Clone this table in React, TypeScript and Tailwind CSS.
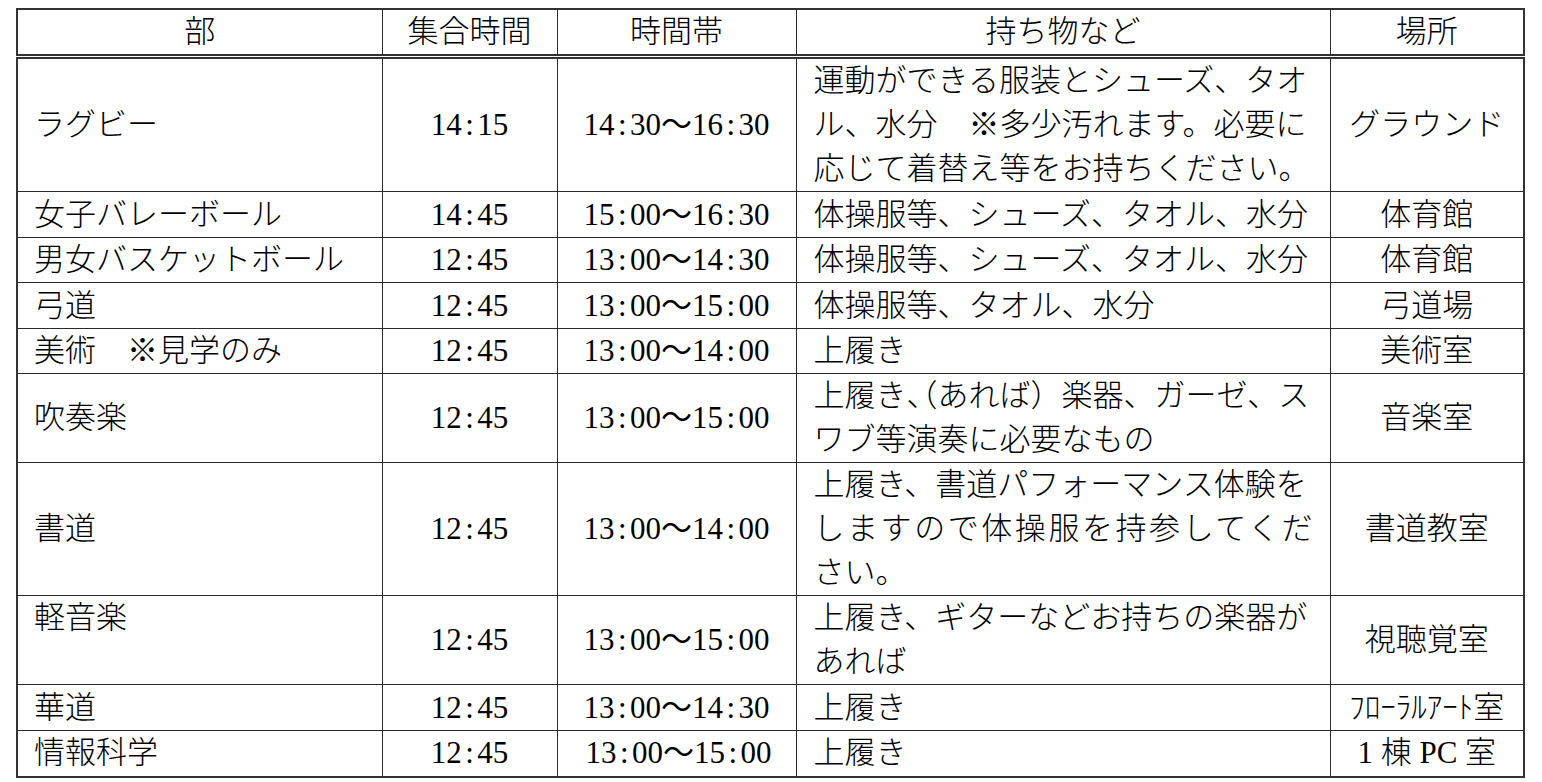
import React from "react";

const FONT = "font-['Liberation_Serif','Noto_Sans_CJK_JP',serif]";

function Time({ s }: { s: string }) {
  const parts = s.split(":");
  const out: React.ReactNode[] = [];
  parts.forEach((p, i) => {
    if (i > 0)
      out.push(
        <span key={"c" + i} className="inline-block w-[0.5em] text-center">
          :
        </span>
      );
    out.push(<span key={"p" + i}>{p}</span>);
  });
  return <span className="whitespace-nowrap font-normal">{out}</span>;
}

type Row = {
  bu: string;
  start: string;
  span: string;
  items: React.ReactNode[];
  place: React.ReactNode;
  h: string;
  buTop?: boolean;
  justifyLine?: number;
  spanPad?: boolean;
};

const H = "[font-feature-settings:'halt']";

const rows: Row[] = [
  {
    bu: "ラグビー",
    start: "14:15",
    span: "14:30〜16:30",
    items: [
      "運動ができる服装とシューズ、タオ",
      "ル、水分　※多少汚れます。必要に",
      "応じて着替え等をお持ちください。",
    ],
    place: "グラウンド",
    h: "h-[133px]",
  },
  {
    bu: "女子バレーボール",
    start: "14:45",
    span: "15:00〜16:30",
    items: ["体操服等、シューズ、タオル、水分"],
    place: "体育館",
    h: "h-[46px]",
  },
  {
    bu: "男女バスケットボール",
    start: "12:45",
    span: "13:00〜14:30",
    items: ["体操服等、シューズ、タオル、水分"],
    place: "体育館",
    h: "h-[45px]",
  },
  {
    bu: "弓道",
    start: "12:45",
    span: "13:00〜15:00",
    items: ["体操服等、タオル、水分"],
    place: "弓道場",
    h: "h-[46px]",
  },
  {
    bu: "美術　※見学のみ",
    start: "12:45",
    span: "13:00〜14:00",
    items: ["上履き"],
    place: "美術室",
    h: "h-[45px]",
  },
  {
    bu: "吹奏楽",
    start: "12:45",
    span: "13:00〜15:00",
    items: [
      <>
        上履き<span className={H}>、（</span>あれば）楽器、ガーゼ、ス
      </>,
      "ワブ等演奏に必要なもの",
    ],
    place: "音楽室",
    h: "h-[89px]",
  },
  {
    bu: "書道",
    start: "12:45",
    span: "13:00〜14:00",
    items: [
      "上履き、書道パフォーマンス体験を",
      "しますので体操服を持参してくだ",
      "さい。",
    ],
    place: "書道教室",
    h: "h-[133px]",
    justifyLine: 1,
  },
  {
    bu: "軽音楽",
    start: "12:45",
    span: "13:00〜15:00",
    items: ["上履き、ギターなどお持ちの楽器が", "あれば"],
    place: "視聴覚室",
    h: "h-[89px]",
    buTop: true,
  },
  {
    bu: "華道",
    start: "12:45",
    span: "13:00〜14:30",
    items: ["上履き"],
    place: "ﾌﾛｰﾗﾙｱｰﾄ室",
    h: "h-[46px]",
  },
  {
    bu: "情報科学",
    start: "12:45",
    span: "13:00〜15:00",
    items: ["上履き"],
    place: "1 棟 PC 室",
    h: "h-[46px]",
    spanPad: true,
  },
];

const cellB = "border border-[#2a2a2a]";

export default function App() {
  return (
    <div className={`min-h-[782px] w-[1542px] bg-white pt-[8px] pl-[16px] text-black font-light ${FONT}`}>
      <table className="table-fixed border-collapse w-[1507px] text-[31px] leading-[44px] border-2 border-[#333]">
        <colgroup>
          <col className="w-[365px]" />
          <col className="w-[175px]" />
          <col className="w-[239px]" />
          <col className="w-[534px]" />
          <col className="w-[194px]" />
        </colgroup>
        <thead>
          <tr className="h-[47px]">
            {["部", "集合時間", "時間帯", "持ち物など", "場所"].map((t) => (
              <th
                key={t}
                className={`${cellB} border-b-[5px] border-b-[#333] border-double font-light text-center align-middle p-0`}
              >
                {t}
              </th>
            ))}
          </tr>
        </thead>
        <tbody>
          {rows.map((r, i) => (
            <tr key={i} className={r.h}>
              <td
                className={`${cellB} px-[16px] py-0 whitespace-nowrap ${
                  r.buTop ? "align-top" : "align-middle"
                }`}
              >
                {r.bu}
              </td>
              <td className={`${cellB} p-0 text-center align-middle`}>
                <Time s={r.start} />
              </td>
              <td
                className={`${cellB} py-0 text-center align-middle ${
                  r.spanPad ? "pl-[4px] pr-0" : "px-0"
                }`}
              >
                <Time s={r.span} />
              </td>
              <td className={`${cellB} px-[17px] py-0 align-middle`}>
                {r.items.map((it, j) => (
                  <div
                    key={j}
                    className={`whitespace-nowrap ${
                      r.justifyLine === j
                        ? "w-[499px] text-justify [text-align-last:justify]"
                        : ""
                    }`}
                  >
                    {it}
                  </div>
                ))}
              </td>
              <td className={`${cellB} p-0 text-center align-middle whitespace-nowrap`}>
                {r.place}
              </td>
            </tr>
          ))}
        </tbody>
      </table>
    </div>
  );
}
